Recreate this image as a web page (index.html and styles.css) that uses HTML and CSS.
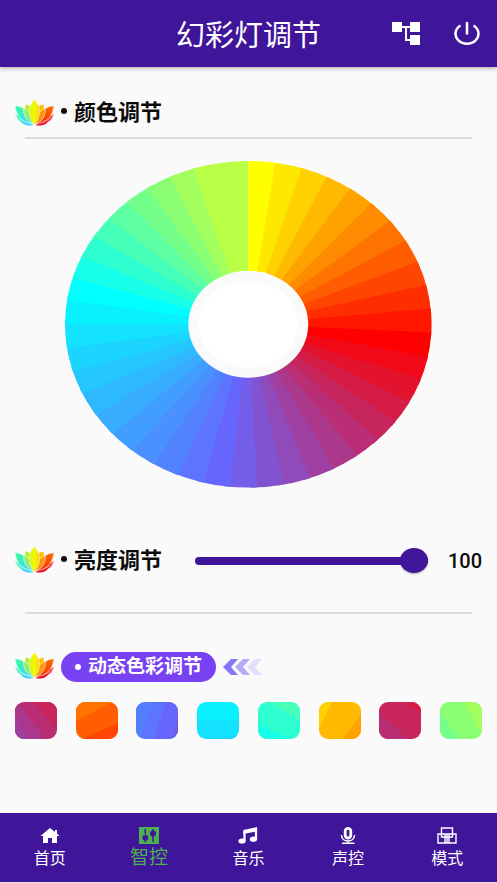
FILE: index.html
```html
<!DOCTYPE html>
<html lang="zh-CN">
<head>
<meta charset="utf-8">
<meta name="viewport" content="width=device-width, initial-scale=1">
<title>幻彩灯调节</title>
<link rel="stylesheet" href="styles.css">
</head>
<body>
<svg class="defs" aria-hidden="true">
  <defs>
    <linearGradient id="g-left" x1="0" y1="0" x2=".7" y2="1"><stop offset="0" stop-color="#35ff9a"/><stop offset="1" stop-color="#35d8ff"/></linearGradient>
    <linearGradient id="g-inner-left" x1="0" y1="0" x2=".8" y2="1"><stop offset="0" stop-color="#a4f34a"/><stop offset="1" stop-color="#6de8c0"/></linearGradient>
    <linearGradient id="g-mid" x1="0" y1="0" x2="1" y2="0"><stop offset="0" stop-color="#c8f51c"/><stop offset=".5" stop-color="#f4f800"/><stop offset="1" stop-color="#ffd000"/></linearGradient>
    <linearGradient id="g-inner-right" x1="1" y1="0" x2=".2" y2="1"><stop offset="0" stop-color="#ffa000"/><stop offset="1" stop-color="#ff8a20"/></linearGradient>
    <linearGradient id="g-right" x1="1" y1="0" x2=".3" y2="1"><stop offset="0" stop-color="#ff7000"/><stop offset="1" stop-color="#fa2800"/></linearGradient>
    <symbol id="lotus" viewBox="0 0 117 80">
      <g stroke="#fafafa" stroke-width="1.500">
        <path fill="#b6ee2c" d="M30 16Q41 14 49 25L54 60Q26 44 30 16Z"/>
        <path fill="#ffbd00" d="M87 16Q76 14 68 25L63 60Q91 44 87 16Z"/>
        <path fill="url(#g-left)" d="M0 44Q8 50 24 55L56 77Q30 84 17 68Q4 61 0 44Z"/>
        <path fill="#f01818" d="M117 44Q109 50 93 55L61 77Q87 84 100 68Q113 61 117 44Z"/>
        <path fill="url(#g-left)" d="M0 20Q36 20 56 74Q6 70 0 20Z"/>
        <path fill="url(#g-right)" d="M117 20Q81 20 61 74Q111 70 117 20Z"/>
        <path fill="url(#g-inner-left)" d="M25 27Q53 36 58 76Q24 64 25 27Z"/>
        <path fill="url(#g-inner-right)" d="M92 27Q64 36 59 76Q93 64 92 27Z"/>
        <path fill="url(#g-mid)" d="M58 0Q90 36 58 78Q26 36 58 0Z"/>
      </g>
      <path fill="none" stroke="#fafafa" stroke-width="1.500" d="M3 50Q20 68 55 76M114 50Q97 68 62 76"/>
      <path fill="#40d8ff" d="M20 71Q41 68 55 78Q34 82 20 71Z"/>
      <path fill="#ee1538" d="M97 71Q76 68 62 78Q83 82 97 71Z"/>
    </symbol>
  </defs>
</svg>

<header class="app-bar">
  <h1 class="app-title">幻彩灯调节</h1>
  <div class="app-actions">
    <button class="icon-button" type="button" aria-label="设备">
      <svg width="28" height="23" viewBox="0 0 28 23"><path fill="#fff" d="M0 0h10v4h8V0h10v10H18V6h-3v11h3v-4h10v10H18v-4h-5V6h-3v4H0z"/></svg>
    </button>
    <button class="icon-button" type="button" aria-label="电源">
      <svg width="26" height="23" viewBox="0 0 26 23" fill="none" stroke="#fff" stroke-width="2.500"><path d="M13 0v12.500M6.500 3.500A11.500 10 0 1 0 19.500 3.500"/></svg>
    </button>
  </div>
</header>

<main class="content">
  <section>
    <h2 class="section-title"><svg class="lotus"><use href="#lotus"/></svg><span class="dot"></span>颜色调节</h2>
    <hr class="divider">
    <svg id="wheel" class="wheel" viewBox="-183.500 -163.500 367 327" role="img" aria-label="色轮"></svg>
  </section>

  <section>
    <div class="brightness">
      <label class="section-title" for="level"><svg class="lotus"><use href="#lotus"/></svg><span class="dot"></span>亮度调节</label>
      <input class="slider" id="level" type="range" min="0" max="100" value="100">
      <output class="level" for="level">100</output>
    </div>
    <hr class="divider">
  </section>

  <section class="dynamic">
    <div class="dynamic-head">
      <svg class="lotus"><use href="#lotus"/></svg>
      <h2 class="pill"><span class="dot"></span>动态色彩调节</h2>
      <svg class="chevrons" width="40" height="16" viewBox="0 0 40 16">
        <path fill="#8378f8" d="M8 0h7L8 8l7 8H8L0 8z"/>
        <path fill="#b4adf6" d="M20 0h7l-7 8 7 8h-7l-8-8z"/>
        <path fill="#e2defb" d="M32 0h7l-7 8 7 8h-7l-8-8z"/>
      </svg>
    </div>
    <div class="swatches">
      <button class="swatch" type="button" aria-label="紫红"><svg viewBox="0 0 42 37" preserveAspectRatio="none"><path fill="#b92e73" d="M0 0h42v37H0z"/><path fill="#a9378b" d="M0 0h2l28 37H0z"/><path fill="#9d40a1" d="M0 18l13 19H0z"/><path fill="#c9255d" d="M17 0h25v27z"/></svg></button>
      <button class="swatch" type="button" aria-label="橙色"><svg viewBox="0 0 42 37" preserveAspectRatio="none"><path fill="#ff5d00" d="M0 0h42v37H0z"/><path fill="#ff7400" d="M0 0h36L0 19z"/><path fill="#ff4600" d="M42 21v16H6z"/></svg></button>
      <button class="swatch" type="button" aria-label="蓝色"><svg viewBox="0 0 42 37" preserveAspectRatio="none"><path fill="#5d74ff" d="M0 0h42v37H0z"/><path fill="#537fff" d="M0 0h17L4 37H0z"/><path fill="#6666ff" d="M29 0h13v37H19z"/><path fill="#735ce8" d="M42 8v29h-5z"/></svg></button>
      <button class="swatch" type="button" aria-label="青色"><svg viewBox="0 0 42 37" preserveAspectRatio="none"><path fill="#09f1ff" d="M0 0h42v18H0z"/><path fill="#13e3ff" d="M0 18h42v19H0z"/><path fill="#1cd5ff" d="M8 37l34-4v4z"/></svg></button>
      <button class="swatch" type="button" aria-label="青绿"><svg viewBox="0 0 42 37" preserveAspectRatio="none"><path fill="#2effd1" d="M0 0h42v37H0z"/><path fill="#46ffb9" d="M10 0h32v18z"/><path fill="#17ffe8" d="M0 23l34 14H0z"/></svg></button>
      <button class="swatch" type="button" aria-label="黄色"><svg viewBox="0 0 42 37" preserveAspectRatio="none"><path fill="#ffb900" d="M0 0h42v37H0z"/><path fill="#ffd100" d="M0 0h13L0 27z"/><path fill="#ffa200" d="M42 13v24H24z"/></svg></button>
      <button class="swatch" type="button" aria-label="玫红"><svg viewBox="0 0 42 37" preserveAspectRatio="none"><path fill="#c9255d" d="M0 0h42v37H0z"/><path fill="#b92e73" d="M0 10l29 27H0z"/><path fill="#d61c46" d="M27 0h15v10z"/></svg></button>
      <button class="swatch" type="button" aria-label="绿色"><svg viewBox="0 0 42 37" preserveAspectRatio="none"><path fill="#8bff74" d="M0 0h42v37H0z"/><path fill="#74ff8b" d="M0 11l20 26H0z"/><path fill="#a2ff5d" d="M24 0h18v33z"/></svg></button>
    </div>
  </section>
</main>

<nav class="tab-bar">
  <a class="tab" href="#home">
    <svg width="20" height="17" viewBox="0 0 20 17"><path fill="#fff" d="M10 1l5 4V3h2v3.500L19.500 9H17v7h-5v-5H8v5H3V9H.5z"/></svg>
    首页</a>
  <a class="tab tab-active" href="#control" aria-current="page">
    <svg width="20" height="17" viewBox="0 0 20 17"><path fill="#4caf50" d="M0 0h20v17H0z"/><g fill="#3f1699"><circle cx="6.300" cy="10.700" r="3"/><circle cx="14" cy="6.500" r="3"/></g><path stroke="#3f1699" stroke-width="1.500" d="M6.300 2v5M6.300 13v2M14 2v2M14 9v6"/></svg>
    智控</a>
  <a class="tab" href="#music">
    <svg width="20" height="17" viewBox="0 0 20 17"><path fill="none" stroke="#fff" stroke-width="2.200" d="M6.500 14V4M18 2v10"/><path fill="#fff" d="M5.400 3L19.100 0v4.200L5.400 7z"/><ellipse cx="4" cy="14" rx="3.600" ry="2.600" fill="#fff"/><ellipse cx="15.500" cy="12.200" rx="3.600" ry="2.600" fill="#fff"/></svg>
    音乐</a>
  <a class="tab" href="#voice">
    <svg width="20" height="17" viewBox="0 0 20 17" fill="none" stroke="#fff"><rect x="7.200" y="1.400" width="5.600" height="9.600" rx="2.800" stroke-width="2.800"/><path stroke-width="1.500" d="M3.500 8c0 8 13 8 13 0M10 14v2M4 16.200h12.500"/></svg>
    声控</a>
  <a class="tab" href="#mode">
    <svg width="20" height="17" viewBox="0 0 20 17" fill="none" stroke="#fff" stroke-width="1.400"><path d="M4.500 1h11v9h-11zM1 7h11v9H1zM8 7h11v9H8zM10 7v9"/></svg>
    模式</a>
</nav>
<script src="wheel.js"></script>
</body>
</html>
```
FILE: styles.css
```css
* {
  box-sizing: border-box;
}

body {
  margin: 0;
  min-height: 100vh;
  display: flex;
  flex-direction: column;
  background: #fafafa;
  color: #0c0c0c;
  font-family: Roboto, "Noto Sans CJK SC", sans-serif;
}

h1, h2 {
  margin: 0;
}

button {
  padding: 0;
  border: 0;
  background: none;
}

svg {
  display: block;
  flex: none;
}

.defs {
  position: absolute;
  width: 0;
  height: 0;
}

.app-bar {
  display: grid;
  grid-template-columns: 1fr auto 1fr;
  align-items: center;
  height: 67px;
  padding: 0 17px;
  background: #3f1699;
  color: #fff;
  box-shadow: 0 1px 5px rgba(0, 0, 0, 0.35);
}

.app-title {
  grid-column: 2;
  padding-top: 4px;
  font-size: 29px;
  line-height: 40px;
  font-weight: 400;
}

.app-actions {
  display: flex;
  justify-content: flex-end;
  gap: 34px;
}

.content {
  flex: 1;
  padding: 30px 15px 20px;
}

.section-title {
  display: flex;
  align-items: center;
  height: 32px;
  font-size: 22px;
  line-height: 32px;
  font-weight: 700;
}

.lotus {
  width: 39px;
  height: 27px;
  margin-bottom: 2px;
}

.dot {
  width: 6px;
  height: 6px;
  margin: 0 7px;
  border-radius: 50%;
  background: currentColor;
}

.section-title .dot {
  margin-bottom: 4px;
}

.divider {
  height: 2px;
  margin: 8px 10px 0;
  border: 0;
  background: #dcdcdc;
}

.wheel {
  width: 78.5%;
  height: auto;
  margin: 22px auto 57px;
}

.brightness {
  display: flex;
  align-items: center;
  margin-bottom: 35px;
}

.slider {
  flex: 1;
  min-width: 0;
  height: 28px;
  margin: 0 20px 0 33px;
  appearance: none;
  background: none;
}

.slider::-webkit-slider-runnable-track {
  height: 8px;
  border-radius: 4px;
  background: #3f1699;
}

.slider::-webkit-slider-thumb {
  appearance: none;
  width: 28px;
  height: 25px;
  margin-top: -9px;
  border-radius: 50%;
  background: #3f1699;
  box-shadow: 0 1px 2px rgba(0, 0, 0, 0.3);
}

.level {
  font-size: 20px;
  line-height: 28px;
  font-weight: 500;
}

.dynamic {
  padding-top: 38px;
}

.dynamic-head {
  display: flex;
  align-items: center;
  gap: 7px;
}

.pill {
  display: flex;
  align-items: center;
  height: 30px;
  padding: 0 14px 0 7px;
  border-radius: 15px;
  background: #7841f1;
  color: #fff;
  font-size: 19px;
  line-height: 30px;
  font-weight: 700;
}

.swatches {
  display: flex;
  justify-content: space-between;
  margin-top: 20px;
}

.swatch {
  width: 42px;
  height: 37px;
  border-radius: 9px;
  overflow: hidden;
}

.swatch svg {
  width: 100%;
  height: 100%;
}

.tab-bar {
  display: grid;
  grid-template-columns: repeat(5, 1fr);
  height: 70px;
  border-bottom: 1px solid #e4def0;
  background: #3f1699;
}

.tab {
  display: flex;
  flex-direction: column;
  align-items: center;
  gap: 2px;
  padding-top: 14px;
  color: #fff;
  font-size: 16px;
  line-height: 26px;
  text-decoration: none;
}

.tab-active {
  gap: 1px;
  color: #4caf50;
  font-size: 19px;
}
```
FILE: wheel.js
```javascript
const wheel = document.getElementById("wheel");
const RX = 183.5;
const RY = 163.5;
const stops = [[255, 255, 0], [255, 0, 0], [102, 102, 255], [0, 255, 255], [255, 255, 0]];
const STEPS = 11;
const SLICES = 42;

function colorAt(i) {
  const a = stops[Math.floor(i / STEPS)];
  const b = stops[Math.floor(i / STEPS) + 1];
  const t = (i % STEPS) / STEPS;
  return `rgb(${a.map((v, k) => Math.round(v + (b[k] - v) * t)).join(",")})`;
}

// Slices after the cyan stop are slightly narrower; the last one closes the ring.
function startAngle(i) {
  if (i === SLICES) return 360;
  return i <= 33 ? i * 8.44 : 278.5 + (i - 33) * 8;
}

function point(deg) {
  const r = deg * Math.PI / 180;
  return `${(RX * Math.sin(r)).toFixed(2)} ${(-RY * Math.cos(r)).toFixed(2)}`;
}

function add(name, attrs) {
  const node = document.createElementNS("http://www.w3.org/2000/svg", name);
  for (const key in attrs) node.setAttribute(key, attrs[key]);
  wheel.appendChild(node);
}

// Each slice runs a little under the next one so no seam shows between them.
for (let i = 0; i < SLICES; i++) {
  const end = Math.min(startAngle(i + 1) + 2, 360);
  add("path", {
    d: `M0 0L${point(startAngle(i))}A${RX} ${RY} 0 0 1 ${point(end)}Z`,
    fill: colorAt(i)
  });
}
add("ellipse", { rx: 60, ry: 53.5, fill: "#fafafa" });
add("ellipse", { rx: 49.5, ry: 43.5, fill: "#fff" });
```
